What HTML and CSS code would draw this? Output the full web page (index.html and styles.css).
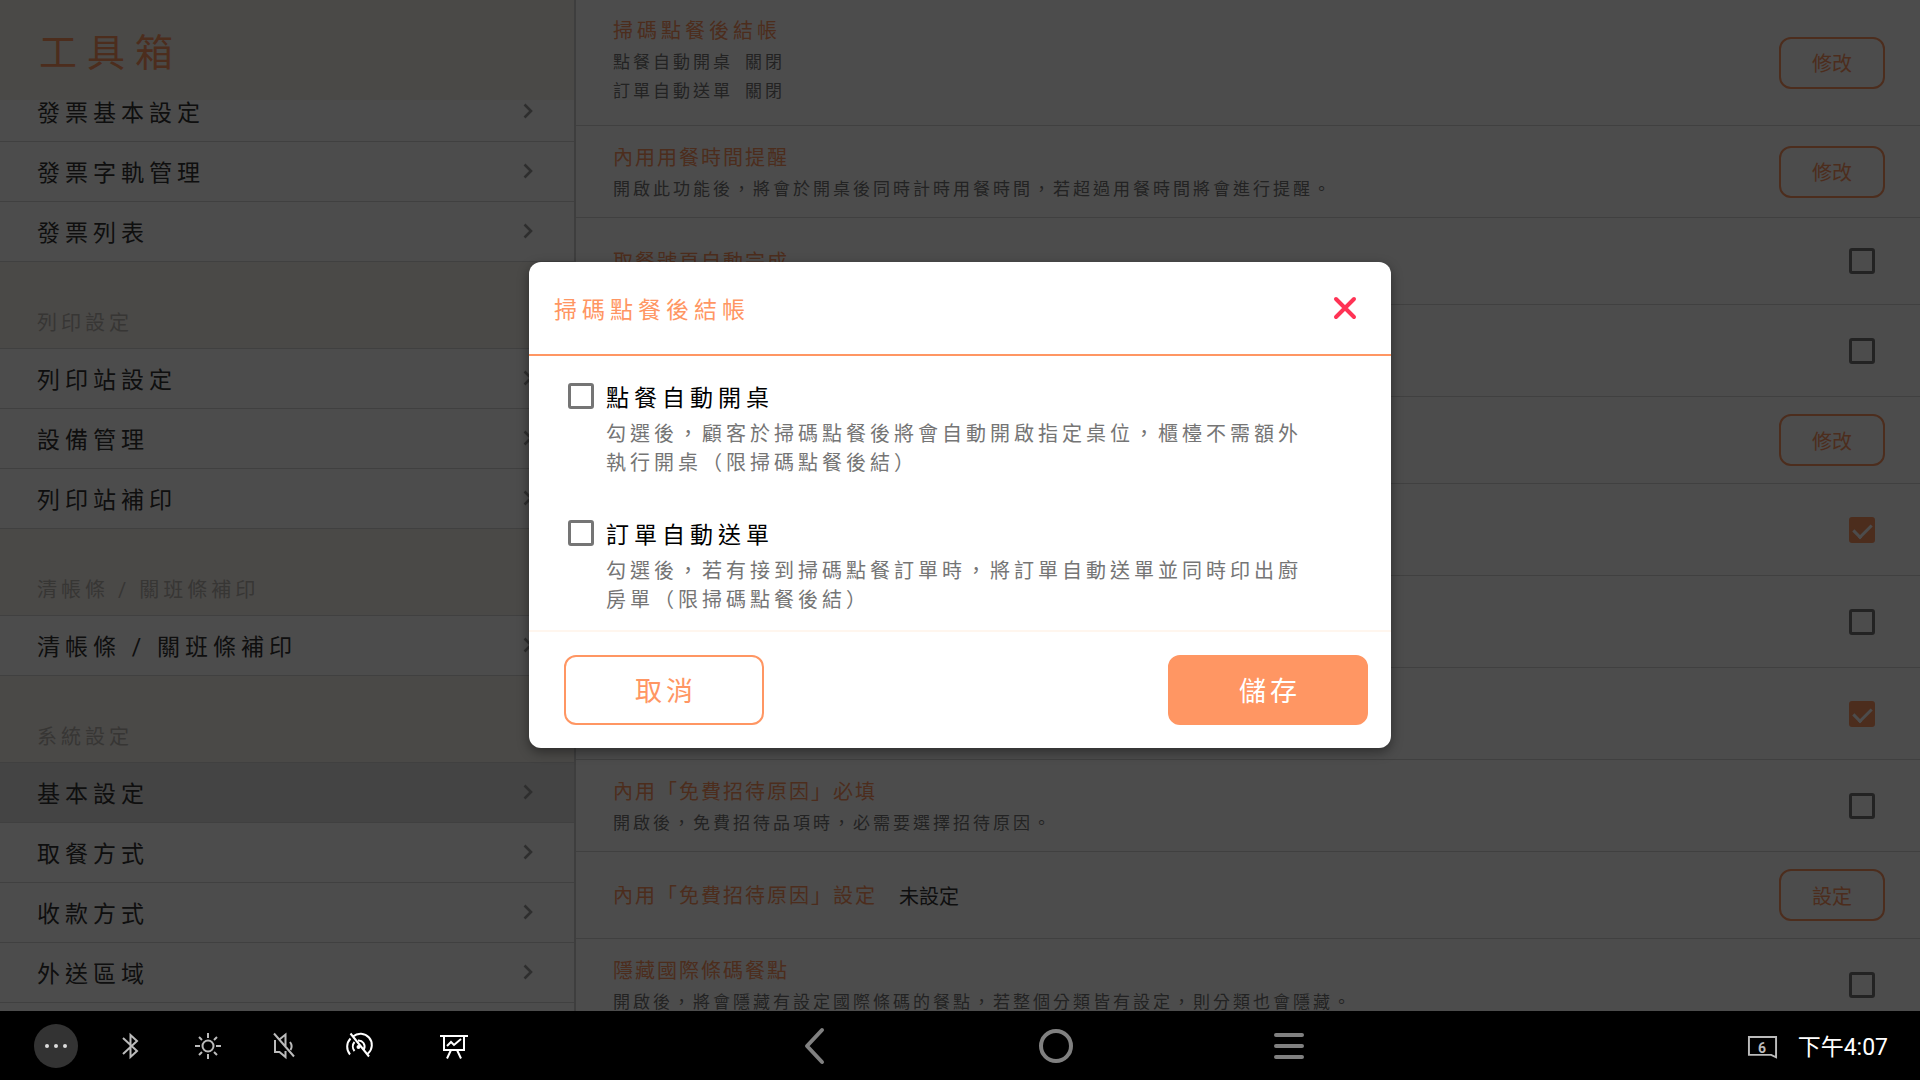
FILE: index.html
```html
<!doctype html>
<html lang="zh-Hant">
<head>
  <meta charset="UTF-8">
  <meta name="viewport" content="width=device-width, initial-scale=1">
  <title>工具箱</title>

  <link rel="stylesheet" href="styles.css">
</head>
<body>

<svg class="sprites">
  <symbol id="chevron" viewBox="0 0 10 16">
    <path d="M1.500 1.500 8 8l-6.500 6.500" fill="none" stroke="currentColor" stroke-width="2.600"/>
  </symbol>
</svg>

<main>
  <aside class="sidebar">
    <h1>工具箱</h1>

    <nav class="menu">
      <a href="#">發票基本設定<svg class="chevron"><use href="#chevron"/></svg></a>
      <a href="#">發票字軌管理<svg class="chevron"><use href="#chevron"/></svg></a>
      <a href="#">發票列表<svg class="chevron"><use href="#chevron"/></svg></a>

      <h2>列印設定</h2>
      <a href="#">列印站設定<svg class="chevron"><use href="#chevron"/></svg></a>
      <a href="#">設備管理<svg class="chevron"><use href="#chevron"/></svg></a>
      <a href="#">列印站補印<svg class="chevron"><use href="#chevron"/></svg></a>

      <h2>清帳條 / 關班條補印</h2>
      <a href="#">清帳條 / 關班條補印<svg class="chevron"><use href="#chevron"/></svg></a>

      <h2>系統設定</h2>
      <a href="#" class="active">基本設定<svg class="chevron"><use href="#chevron"/></svg></a>
      <a href="#">取餐方式<svg class="chevron"><use href="#chevron"/></svg></a>
      <a href="#">收款方式<svg class="chevron"><use href="#chevron"/></svg></a>
      <a href="#">外送區域<svg class="chevron"><use href="#chevron"/></svg></a>
    </nav>
  </aside>

  <section class="settings">
    <div class="row states">
      <div class="text">
        <h3 class="wide">掃碼點餐後結帳</h3>
        <p>點餐自動開桌<span>關閉</span></p>
        <p>訂單自動送單<span>關閉</span></p>
      </div>
      <button type="button" class="edit">修改</button>
    </div>

    <div class="row tall">
      <div class="text">
        <h3>內用用餐時間提醒</h3>
        <p>開啟此功能後，將會於開桌後同時計時用餐時間，若超過用餐時間將會進行提醒。</p>
      </div>
      <button type="button" class="edit">修改</button>
    </div>

    <div class="row">
      <h3><label for="autoFinish">取餐號頁自動完成</label></h3>
      <input type="checkbox" id="autoFinish">
    </div>

    <div class="row tall"><input type="checkbox"></div>
    <div class="row"><button type="button" class="edit">修改</button></div>
    <div class="row tall"><input type="checkbox" checked></div>
    <div class="row tall"><input type="checkbox"></div>
    <div class="row tall"><input type="checkbox" checked></div>

    <div class="row tall">
      <div class="text">
        <h3><label for="reasonRequired">內用「免費招待原因」必填</label></h3>
        <p>開啟後，免費招待品項時，必需要選擇招待原因。</p>
      </div>
      <input type="checkbox" id="reasonRequired">
    </div>

    <div class="row">
      <h3>內用「免費招待原因」設定</h3>
      <span class="value">未設定</span>
      <button type="button" class="edit">設定</button>
    </div>

    <div class="row tall">
      <div class="text">
        <h3><label for="hideBarcode">隱藏國際條碼餐點</label></h3>
        <p>開啟後，將會隱藏有設定國際條碼的餐點，若整個分類皆有設定，則分類也會隱藏。</p>
      </div>
      <input type="checkbox" id="hideBarcode">
    </div>
  </section>

  <div class="overlay">
    <form class="dialog" role="dialog" aria-labelledby="dialogTitle">
      <header>
        <h2 id="dialogTitle">掃碼點餐後結帳</h2>
        <button type="button" class="close" aria-label="關閉">
          <svg viewBox="0 0 24 24"><path d="M3 3l18 18M21 3L3 21" stroke="currentColor" stroke-width="4" stroke-linecap="round"/></svg>
        </button>
      </header>

      <div class="options">
        <div class="option">
          <input type="checkbox" id="autoOpen">
          <div>
            <label for="autoOpen">點餐自動開桌</label>
            <p>勾選後，顧客於掃碼點餐後將會自動開啟指定桌位，櫃檯不需額外執行開桌（限掃碼點餐後結）</p>
          </div>
        </div>
        <div class="option">
          <input type="checkbox" id="autoSend">
          <div>
            <label for="autoSend">訂單自動送單</label>
            <p>勾選後，若有接到掃碼點餐訂單時，將訂單自動送單並同時印出廚房單（限掃碼點餐後結）</p>
          </div>
        </div>
      </div>

      <footer>
        <button type="button" class="cancel">取消</button>
        <button type="submit" class="save">儲存</button>
      </footer>
    </form>
  </div>
</main>

<footer class="system">
  <div class="tray">
    <button type="button" class="more" aria-label="more">
      <svg viewBox="0 0 44 44"><circle cx="13" cy="22" r="2"/><circle cx="22" cy="22" r="2"/><circle cx="31" cy="22" r="2"/></svg>
    </button>
    <button type="button" aria-label="bluetooth">
      <svg viewBox="0 0 44 44"><path d="M13 14l14 13-6.500 6V11l6.500 6-14 13"/></svg>
    </button>
    <button type="button" aria-label="brightness">
      <svg viewBox="0 0 44 44"><circle cx="22" cy="22" r="5.500"/><path d="M22 9v5M22 30v5M9 22h5M30 22h5M13 13l3 3M28 28l3 3M13 31l3-3M28 16l3-3"/></svg>
    </button>
    <button type="button" aria-label="mute">
      <svg viewBox="0 0 44 44"><path d="M12 9.500l20 23M13 16v12h4.500l6 5V27M18 15l5.500-4.500V22M28 18q3 4 .5 8"/></svg>
    </button>
    <button type="button" aria-label="hotspot" class="bright">
      <svg viewBox="0 0 44 44"><path d="M12.500 9.500l18.500 23M12 30.500a12 12 0 0 1 .5-16M15 12.500a11 11 0 0 1 15 17M16.500 27a7 7 0 0 1 0-9M20 16.500a6 6 0 0 1 6 8.500"/><circle cx="20.500" cy="23" r="1"/></svg>
    </button>
    <button type="button" aria-label="board" class="bright board">
      <svg viewBox="0 0 44 44"><path d="M8 12h28M12 12v14h20V12M19 26l-4 8.500M25 26l4 8.500M15 22l4-4 3 3 7-6"/></svg>
    </button>
  </div>

  <div class="keys">
    <button type="button" aria-label="back">
      <svg viewBox="0 0 44 44"><path d="M25 6L10 22l15 16"/></svg>
    </button>
    <button type="button" aria-label="home">
      <svg viewBox="0 0 44 44"><circle cx="22" cy="22" r="15"/></svg>
    </button>
    <button type="button" aria-label="recent">
      <svg viewBox="0 0 44 44"><path d="M5 11h26M5 22h26M5 33h26"/></svg>
    </button>
  </div>

  <div class="status">
    <span class="badge">
      <svg viewBox="0 0 32 26"><path d="M2 2h28v21l-5-2.500H2z"/></svg>
      <b>6</b>
    </span>
    <time>下午4:07</time>
  </div>
</footer>

</body>
</html>
```
FILE: styles.css
```css
* {
    margin: 0;
    padding: 0;
    box-sizing: border-box;
    font-family: "Noto Sans CJK TC", sans-serif;
}

body {
    height: 100vh;
    display: flex;
    flex-direction: column;
    overflow: hidden;
    background: #000;
}

button {
    background: none;
    border: none;
    cursor: pointer;
}

h1, h2, h3 {
    font-weight: normal;
}

.sprites {
    display: none;
}

main {
    position: relative;
    flex: 1;
    min-height: 0;
    display: flex;
    overflow: hidden;
    background: #fff;
}

/* sidebar */

.sidebar {
    width: 30%;
    border-right: 2px solid #d0d0d0;
}

.sidebar h1 {
    position: relative;
    z-index: 1;
    height: 100px;
    padding-left: 39px;
    line-height: 100px;
    font-size: 38px;
    letter-spacing: 10px;
    color: #ff9663;
    background: #f9f4ee;
}

/* list is scrolled a little under the title */
.menu {
    margin-top: -18px;
    color: #333;
}

.menu a, .menu h2 {
    font-family: Roboto, "Noto Sans CJK TC", sans-serif;
    border-bottom: 1px solid #d6d6d6;
}

.menu a {
    height: 60px;
    padding: 0 41px 2px 37px;
    display: flex;
    align-items: center;
    justify-content: space-between;
    font-size: 23px;
    letter-spacing: 5px;
    color: inherit;
    text-decoration: none;
}

.menu a.active {
    background: #e3e3e3;
}

.menu h2 {
    height: 87px;
    padding: 43px 37px 0;
    font-size: 20px;
    line-height: 36px;
    letter-spacing: 4px;
    color: #b8b5b0;
    background: #f9f4ee;
}

.chevron {
    width: 10px;
    height: 16px;
    color: #999;
}

/* settings list */

.settings {
    flex: 1;
    min-width: 0;
}

.row {
    min-height: 87px;
    padding: 0 35px 0 37px;
    display: flex;
    align-items: center;
    border-bottom: 1px solid #d6d6d6;
}

.row.tall {
    min-height: 92px;
}

.row.states {
    min-height: 126px;
}

.states .text {
    padding-bottom: 7px;
}

.row h3 {
    font-size: 20px;
    line-height: 30px;
    letter-spacing: 2px;
    color: #ff9663;
}

.row h3.wide {
    letter-spacing: 4px;
}

.row p {
    font-size: 17px;
    line-height: 29px;
    letter-spacing: 3px;
    color: #757575;
}

.row p span {
    margin-left: 12px;
}

.row h3 + p {
    margin-top: 1px;
}

.row .value {
    margin-left: 22px;
    font-size: 20px;
    color: #333;
}

.row > input, .edit {
    margin-left: auto;
}

.row > input {
    margin-right: 10px;
}

.edit {
    width: 106px;
    height: 52px;
    font-size: 20px;
    color: #ff9663;
    border: 2px solid #ff9663;
    border-radius: 12px;
}

input[type=checkbox] {
    appearance: none;
    flex: none;
    width: 26px;
    height: 26px;
    display: grid;
    justify-content: center;
    align-content: start;
    border: 3px solid #757575;
    border-radius: 3px;
}

input[type=checkbox]:checked {
    background: #ff9663;
    border-color: #ff9663;
}

input[type=checkbox]:checked::after {
    content: "";
    width: 8px;
    height: 15px;
    border: solid #fff;
    border-width: 0 3px 3px 0;
    transform: rotate(45deg);
}

/* dialog */

.overlay {
    position: absolute;
    inset: 0;
    z-index: 2;
    padding-bottom: 2px;
    display: flex;
    align-items: center;
    justify-content: center;
    background: rgba(0, 0, 0, .7);
}

.dialog {
    width: 862px;
    background: #fff;
    border-radius: 12px;
    box-shadow: 0 4px 12px rgba(0, 0, 0, .4);
}

.dialog header {
    height: 94px;
    padding: 0 34px 0 25px;
    display: flex;
    align-items: center;
    justify-content: space-between;
    border-bottom: 2px solid #ff9663;
}

.dialog h2 {
    font-size: 23px;
    letter-spacing: 5px;
    color: #ff9663;
}

.close {
    width: 24px;
    height: 24px;
    color: #ff3355;
}

.close svg {
    display: block;
}

.options {
    padding: 23px 80px 17px 39px;
    display: flex;
    flex-direction: column;
    gap: 40px;
}

.option {
    display: flex;
    gap: 12px;
}

.option input {
    margin-top: 4px;
}

.option label {
    display: block;
    font-size: 23px;
    line-height: 34px;
    letter-spacing: 5px;
}

.option p {
    margin-top: 5px;
    font-size: 20px;
    line-height: 29px;
    letter-spacing: 4px;
    color: #757575;
}

.dialog footer {
    padding: 23px 23px 23px 35px;
    display: flex;
    justify-content: space-between;
    border-top: 2px solid #fff6ee;
}

.dialog footer button {
    width: 200px;
    height: 70px;
    padding-left: 4px;
    font-size: 27px;
    letter-spacing: 4px;
    border: 2px solid #ff9663;
    border-radius: 12px;
}

.dialog .cancel {
    color: #ff9663;
}

.dialog .save {
    color: #fff;
    background: #ff9663;
}

/* system bar */

.system {
    height: 69px;
    display: grid;
    grid-template-columns: 41% 1fr auto;
    align-items: center;
    background: #000;
}

.system svg {
    display: block;
    fill: none;
    stroke: currentColor;
    stroke-width: 2;
}

.tray {
    padding-left: 34px;
    display: flex;
    gap: 32px;
}

.tray button {
    width: 44px;
    height: 44px;
    color: #bbb;
}

.tray .bright {
    color: #fff;
}

.tray .board {
    margin-left: 18px;
}

.tray .more {
    background: #333;
    border-radius: 50%;
}

.tray .more svg {
    fill: #ddd;
    stroke: none;
}

.keys {
    display: flex;
    gap: 173px;
}

.keys button {
    width: 64px;
    height: 44px;
    padding: 0 10px;
    color: #808080;
}

.keys svg {
    stroke-width: 4;
    stroke-linecap: round;
    stroke-linejoin: round;
}

.status {
    padding: 4px 32px 0 0;
    display: flex;
    align-items: center;
    gap: 20px;
    color: #fff;
}

.badge {
    width: 31px;
    height: 26px;
    display: grid;
    place-items: center;
    color: #bbb;
}

.badge svg, .badge b {
    grid-area: 1 / 1;
}

.badge b {
    font: bold 14px/20px Roboto, sans-serif;
}

.status time {
    font: 23px/30px Roboto, "Noto Sans CJK TC", sans-serif;
}
```
